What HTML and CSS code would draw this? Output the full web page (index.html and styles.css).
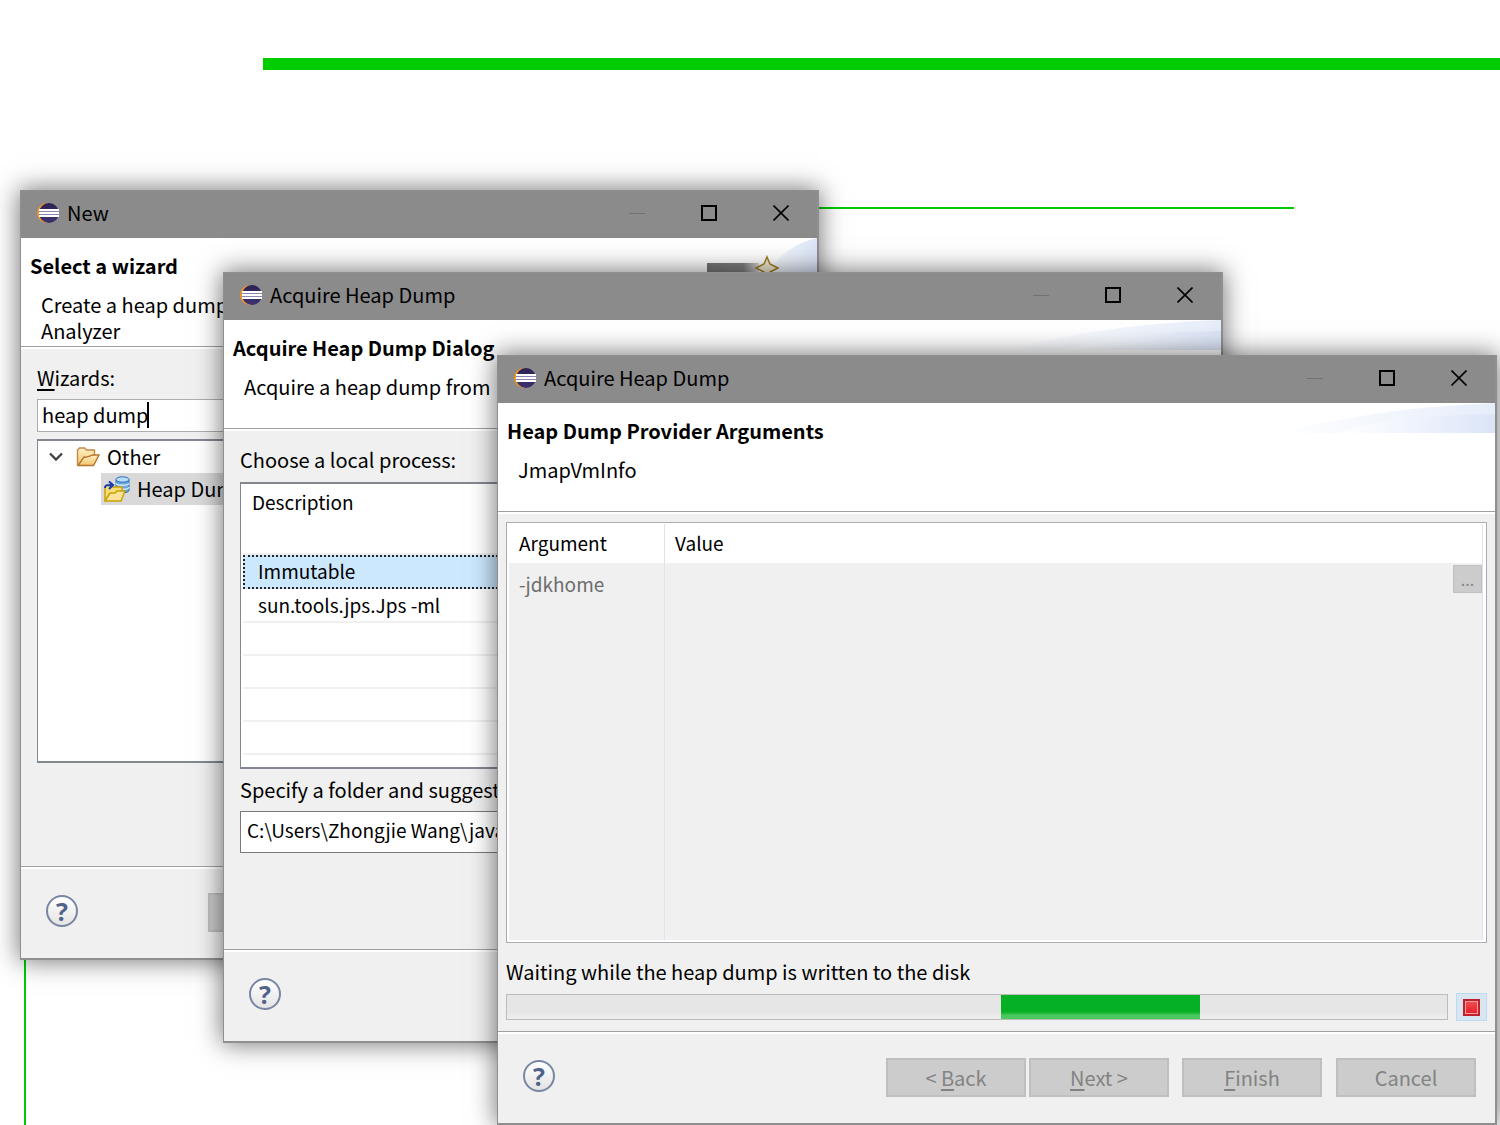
FILE: index.html
```html
<!DOCTYPE html>
<html lang="en">
<head>
<meta charset="utf-8">
<title>Acquire Heap Dump</title>
<link rel="stylesheet" href="styles.css">
</head>
<body>
<svg class="defs" aria-hidden="true">
  <defs>
    <linearGradient id="ball" x1="0" y1="0" x2="0" y2="1"><stop offset="0" stop-color="#2c2255"/><stop offset="1" stop-color="#3b3270"/></linearGradient>
    <linearGradient id="sweep" x1="0" y1="0" x2="1" y2="0"><stop offset="0" stop-color="#ffffff"/><stop offset=".5" stop-color="#eef3fc"/><stop offset="1" stop-color="#dbe4f7"/></linearGradient>
    <linearGradient id="sweep-top" x1="0" y1="0" x2="1" y2="0"><stop offset="0" stop-color="#ffffff"/><stop offset="1" stop-color="#e6edfa"/></linearGradient>
    <linearGradient id="folder" x1="0" y1="0" x2="0" y2="1"><stop offset="0" stop-color="#fff0c4"/><stop offset="1" stop-color="#f2c46c"/></linearGradient>
    <linearGradient id="bar" x1="0" y1="0" x2="1" y2="0"><stop offset="0" stop-color="#777777"/><stop offset=".7" stop-color="#808080"/><stop offset="1" stop-color="#d8d8d8"/></linearGradient>
    <symbol id="eclipse" viewBox="0 0 22 20">
      <circle cx="10" cy="10" r="10" fill="#f7941e"/>
      <circle cx="12.500" cy="10" r="10" fill="#8b8b8b"/>
      <circle cx="12" cy="10" r="10" fill="url(#ball)"/>
      <path d="M2 10h20" stroke="#8a86b4" stroke-width="6"/>
      <path d="M2 7h20M2 10h20M2 13h20" stroke="#fff" stroke-width="2"/>
    </symbol>
    <symbol id="minimize" viewBox="0 0 16 16"><path d="M0 8.500h16" stroke="#727272"/></symbol>
    <symbol id="maximize" viewBox="0 0 16 16"><path d="M1 1h14v14H1z" fill="none" stroke="#000" stroke-width="2"/></symbol>
    <symbol id="close" viewBox="0 0 16 16"><path d="M.5.5l15 15M15.500.5l-15 15" stroke="#000" stroke-width="1.600"/></symbol>
    <symbol id="swoosh" viewBox="0 0 216 30">
      <path d="M0 30C70 12 140 3 216 0v30z" fill="url(#sweep-top)"/>
      <path d="M60 30C90 18 150 12 216 11v19z" fill="url(#sweep)"/>
    </symbol>
  </defs>
</svg>

<main class="slide">
  <div class="rule"></div>
  <div class="frame"></div>

  <section class="window window-new">
    <header class="titlebar">
      <svg class="logo"><use href="#eclipse"/></svg>
      <span class="caption">New</span>
      <button class="winbtn" aria-label="Minimize"><svg><use href="#minimize"/></svg></button>
      <button class="winbtn" aria-label="Maximize"><svg><use href="#maximize"/></svg></button>
      <button class="winbtn" aria-label="Close"><svg><use href="#close"/></svg></button>
    </header>
    <div class="banner">
      <h2>Select a wizard</h2>
      <p>Create a heap dump<br>Analyzer</p>
      <svg class="wizard-art" viewBox="0 0 112 60" aria-hidden="true">
        <path d="M50 60C62 25 85 6 112 0v60z" fill="url(#sweep)"/>
        <path d="M2 25h52v20H2z" fill="url(#bar)"/>
        <path d="M62 19l3 7 8 4-8 4-3 8-3-8-8-4 8-4z" fill="#f3ecd2" stroke="#a07c20" stroke-width="1.500"/>
      </svg>
    </div>
    <div class="content">
      <label class="line" for="wizards"><u>W</u>izards:</label>
      <div class="filter">
        <input id="wizards" type="text" value="heap dump">
        <span class="caret"></span>
      </div>
      <ul class="tree">
        <li>
          <svg class="chevron" viewBox="0 0 14 10"><path d="M1 1.500l6 6 6-6" fill="none" stroke="#444" stroke-width="2.400"/></svg>
          <svg class="folder" viewBox="0 0 24 20">
            <path d="M1.500 18V3l2-2h5l2 2h8v5" fill="url(#folder)" stroke="#c08a45" stroke-width="1.400"/>
            <path d="M2 18.500L8 10c3 1 6-1.500 9-2h6l-5.500 10.500z" fill="url(#folder)" stroke="#b5742f" stroke-width="1.400"/>
          </svg>
          <span>Other</span>
        </li>
        <li class="chosen">
          <svg class="dump" viewBox="0 0 26 26">
            <path d="M12 3.500v11c0 3 13 3 13 0v-11" fill="#6ba6e0" stroke="#2f6fb8"/>
            <path d="M12 7c0 3 13 3 13 0M12 11c0 3 13 3 13 0" fill="none" stroke="#d5ebfc" stroke-width="1.300"/>
            <ellipse cx="18.500" cy="3.500" rx="6.500" ry="2.700" fill="#b5dcf8" stroke="#2f6fb8"/>
            <path d="M1 25V11l2-2h4l2 2h9v4" fill="#f7dc79" stroke="#c9a200" stroke-width="1.500"/>
            <path d="M1 25l5-8h5l2-2h8l-4 10z" fill="#fbe49a" stroke="#c9a200" stroke-width="1.500"/>
            <path d="M1 12c0-3 2-3 6-3M5 5.500L9 9l-4 4" fill="none" stroke="#1238b0" stroke-width="2"/>
          </svg>
          <span>Heap Dump</span>
        </li>
      </ul>
    </div>
    <footer class="actions">
      <button class="help" aria-label="Help">?</button>
      <div class="buttons"><button class="push" aria-label="Back" disabled></button></div>
    </footer>
  </section>

  <section class="window window-process">
    <header class="titlebar">
      <svg class="logo"><use href="#eclipse"/></svg>
      <span class="caption">Acquire Heap Dump</span>
      <button class="winbtn" aria-label="Minimize"><svg><use href="#minimize"/></svg></button>
      <button class="winbtn" aria-label="Maximize"><svg><use href="#maximize"/></svg></button>
      <button class="winbtn" aria-label="Close"><svg><use href="#close"/></svg></button>
    </header>
    <div class="banner">
      <h2>Acquire Heap Dump Dialog</h2>
      <p>Acquire a heap dump from</p>
      <svg class="swoosh" aria-hidden="true"><use href="#swoosh"/></svg>
    </div>
    <div class="content">
      <span class="line" id="process-label">Choose a local process:</span>
      <div class="processes">
        <table aria-labelledby="process-label">
          <thead><tr><th>Description</th></tr></thead>
          <tbody>
            <tr class="selected"><td>Immutable</td></tr>
            <tr><td>sun.tools.jps.Jps -ml</td></tr>
            <tr><td></td></tr>
            <tr><td></td></tr>
            <tr><td></td></tr>
            <tr><td></td></tr>
          </tbody>
        </table>
      </div>
      <label class="line" for="folder-path">Specify a folder and suggest</label>
      <input class="path" id="folder-path" type="text" value="C:\Users\Zhongjie Wang\java">
    </div>
    <footer class="actions">
      <button class="help" aria-label="Help">?</button>
    </footer>
  </section>

  <section class="window window-arguments">
    <header class="titlebar">
      <svg class="logo"><use href="#eclipse"/></svg>
      <span class="caption">Acquire Heap Dump</span>
      <button class="winbtn" aria-label="Minimize"><svg><use href="#minimize"/></svg></button>
      <button class="winbtn" aria-label="Maximize"><svg><use href="#maximize"/></svg></button>
      <button class="winbtn" aria-label="Close"><svg><use href="#close"/></svg></button>
    </header>
    <div class="banner">
      <h2>Heap Dump Provider Arguments</h2>
      <p>JmapVmInfo</p>
      <svg class="swoosh" aria-hidden="true"><use href="#swoosh"/></svg>
    </div>
    <div class="content">
      <div class="arguments">
        <table>
          <thead><tr><th class="name">Argument</th><th>Value</th></tr></thead>
          <tbody><tr><td>-jdkhome</td><td class="value"><button class="browse" disabled>...</button></td></tr></tbody>
        </table>
      </div>
      <span class="line" id="status">Waiting while the heap dump is written to the disk</span>
      <div class="progress-row">
        <div class="progress" role="progressbar" aria-labelledby="status"><div class="chunk"></div></div>
        <button class="stop" aria-label="Stop"><span></span></button>
      </div>
    </div>
    <footer class="actions">
      <button class="help" aria-label="Help">?</button>
      <div class="buttons">
        <button class="push" disabled>&lt; <u>B</u>ack</button>
        <button class="push" disabled><u>N</u>ext &gt;</button>
        <button class="push" disabled><u>F</u>inish</button>
        <button class="push" disabled>Cancel</button>
      </div>
    </footer>
  </section>
</main>
</body>
</html>
```

FILE: styles.css
```css
* { box-sizing: border-box; }

body {
  margin: 0;
  background: #fff;
  color: #000;
  font: 20px/28px "Noto Sans CJK SC", "Noto Sans", sans-serif;
}

button, input { font: inherit; color: inherit; margin: 0; padding: 0; border-radius: 0; }

u { text-decoration: underline; text-decoration-thickness: 2px; text-underline-offset: 3px; }

.defs { position: absolute; width: 0; height: 0; }

.slide { position: relative; min-height: 100vh; overflow: hidden; }

.rule { position: absolute; top: 58px; left: 263px; right: 0; height: 12px; background: #00cc00; }

.frame {
  position: absolute;
  top: 207px;
  left: 24px;
  right: 206px;
  bottom: 0;
  border-top: 2px solid #00cc00;
  border-left: 2px solid #00cc00;
}

/* Windows */
.window {
  position: absolute;
  display: flex;
  flex-direction: column;
  min-height: 770px;
  border: solid #8f8f8f;
  border-width: 1px 2px 2px 1px;
  background: #f0f0f0;
  box-shadow: 0 0 24px 1px rgba(0, 0, 0, .55);
}
.window-new { top: 190px; left: 20px; right: 681px; }
.window-process { top: 272px; left: 223px; right: 277px; min-height: 771px; }
.window-arguments { top: 355px; left: 497px; right: 3px; }

.titlebar {
  display: flex;
  align-items: center;
  height: 47px;
  padding: 0 0 3px 16px;
  background: #8b8b8b;
}
.logo { width: 22px; height: 20px; }
.caption { flex: 1; padding-left: 8px; }
.winbtn {
  display: grid;
  place-items: center;
  width: 72px;
  height: 44px;
  border: 0;
  background: none;
}
.winbtn svg { width: 16px; height: 16px; }

.banner {
  position: relative;
  height: 111px;
  padding: 14px 9px 0;
  background: #fff;
  border-bottom: 2px solid #fff;
  box-shadow: inset 0 -1px #a0a0a0;
}
.banner h2 { margin: 0; font-size: 20px; line-height: 28px; }
.banner p { margin: 12px 0 0 11px; line-height: 26px; }
.swoosh { position: absolute; top: 0; right: 0; width: 216px; height: 30px; }
.wizard-art { position: absolute; top: 0; right: 0; width: 112px; height: 60px; }

.content { flex: 1; display: flex; flex-direction: column; padding: 15px 16px 0; }
.window-arguments .content { padding: 8px 8px 0; }
.line { display: block; line-height: 28px; white-space: nowrap; }

.actions {
  display: flex;
  align-items: center;
  justify-content: space-between;
  height: 92px;
  padding: 0 19px 0 25px;
  border-top: 1px solid #a0a0a0;
  box-shadow: inset 0 2px #fff;
}
.help {
  width: 32px;
  height: 32px;
  margin-bottom: 4px;
  border: 2px solid #7886a0;
  border-radius: 50%;
  background: linear-gradient(#fff, #e4e4e4);
  color: #50618a;
  font: bold 25px/26px "Open Sans", sans-serif;
}
.buttons { display: grid; grid-template-columns: 143px 153px 154px 140px; }
.push {
  width: 140px;
  height: 39px;
  border: 2px solid #bfbfbf;
  background: #ccc;
  color: #838383;
}

/* Wizard selection */
.filter { position: relative; margin-top: 7px; }
.filter input {
  display: block;
  width: 100%;
  height: 33px;
  padding: 0 4px 2px;
  border: 1px solid #abadb3;
  background: #fff;
}
.caret { position: absolute; top: 3px; left: 110px; width: 2px; height: 26px; background: #000; }
.tree {
  height: 324px;
  margin: 7px 0 0;
  padding: 0 0 0 11px;
  border: 2px solid #828790;
  border-width: 2px 1px 2px 1px;
  background: #fff;
  list-style: none;
}
.tree li { display: flex; align-items: center; height: 32px; }
.chevron { width: 14px; height: 10px; }
.folder { width: 24px; height: 20px; margin: 0 7px 0 13px; }
.tree .chosen { margin-left: 52px; padding-left: 3px; background: #d9d9d9; }
.dump { width: 26px; height: 26px; margin-right: 7px; }

/* Process list */
table { width: 100%; border-collapse: separate; border-spacing: 0; font-size: 19px; }
th, td { padding: 0; font-weight: normal; text-align: left; vertical-align: top; }
.processes {
  height: 287px;
  margin: 8px 0 7px;
  padding: 0 2px;
  border: 2px solid #828790;
  border-width: 2px 1px;
  background: #fff;
}
.processes th { height: 71px; padding: 4px 9px 0; border-bottom: 2px solid #f0f0f0; }
.processes td { height: 33px; padding: 2px 15px; border-bottom: 2px solid #f0f0f0; }
.processes .selected td {
  outline: 2px dotted #222;
  outline-offset: -2px;
  border-bottom-color: #cce8ff;
  background: #cce8ff;
}
.path {
  height: 42px;
  margin-top: 7px;
  padding: 0 6px 6px;
  border: 1px solid #7a7a7a;
  background: #fff;
  font-size: 19px;
}

/* Argument table */
.arguments {
  height: 421px;
  margin-bottom: 15px;
  padding: 1px 3px 2px 2px;
  border: 1px solid #abadb3;
  background: #fff;
}
.arguments table { height: 100%; background: #f0f0f0; }
.arguments th { height: 39px; padding: 5px 10px; background: #fff; border-right: 1px solid #e2e2e2; }
.arguments td { padding: 7px 10px; border-right: 1px solid #dce4f0; color: #6d6d6d; }
.arguments .name { width: 156px; }
.arguments .value { padding: 1px 0; text-align: right; }
.browse {
  width: 29px;
  height: 28px;
  border: 1px solid #bfbfbf;
  background: #ccc;
  color: #838383;
  font-size: 16px;
  line-height: 24px;
}

.progress-row { display: flex; align-items: center; gap: 8px; margin-top: 7px; }
.progress {
  flex: 1;
  height: 26px;
  border: 1px solid #bcbcbc;
  background: linear-gradient(#e6e6e6 70%, #efefef);
}
.chunk {
  width: 199px;
  height: 24px;
  margin-left: 494px;
  background: linear-gradient(#06b025 70%, #4cc860 85%);
}
.stop {
  display: grid;
  place-items: center;
  width: 31px;
  height: 28px;
  border: 1px solid #bcdcf4;
  background: #d8e6f2;
}
.stop span {
  width: 17px;
  height: 17px;
  border: 2px solid #c4202c;
  box-shadow: inset 0 0 0 1px #f5a3a3;
  background: linear-gradient(#f05050, #e81c2c);
}
```
